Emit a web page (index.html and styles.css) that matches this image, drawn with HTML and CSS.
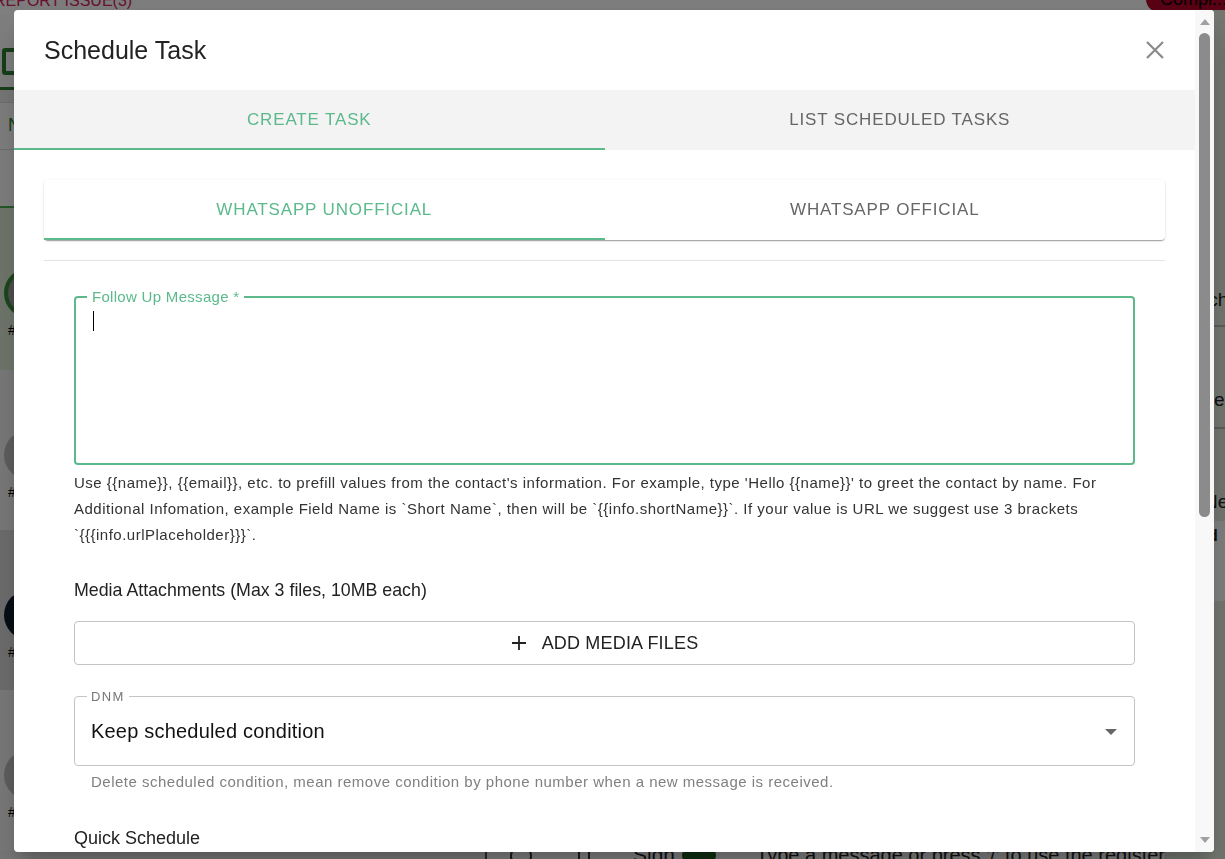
FILE: index.html
```html
<!DOCTYPE html>
<html lang="en">
<head>
    <meta charset="UTF-8">
    <meta name="viewport" content="width=device-width, initial-scale=1.0">
    <title>Schedule Task</title>
    <link rel="stylesheet" href="styles.css">
</head>
<body>
    <!-- page behind the dialog -->
    <div class="app">
        <div class="topbar">
            <span class="report">REPORT ISSUE(3)</span>
            <span class="complete-pill">Compl...</span>
        </div>
        <div class="main">
            <aside class="chat-list">
                <div class="list-head">
                    <div class="list-icon"></div>
                </div>
                <div class="list-filter">N</div>
                <div class="list-search"></div>
                <div class="chat-item chat-item-active">
                    <div class="avatar avatar-ring"></div>
                    <span class="chat-tag">#</span>
                </div>
                <div class="chat-item">
                    <div class="avatar"></div>
                    <span class="chat-tag">#</span>
                </div>
                <div class="chat-item chat-item-dark">
                    <div class="avatar avatar-dark"></div>
                    <span class="chat-tag">#</span>
                </div>
                <div class="chat-item">
                    <div class="avatar"></div>
                    <span class="chat-tag">#</span>
                </div>
            </aside>
            <section class="conversation">
                <div class="messages"></div>
                <div class="composer">
                    <span class="composer-smile"></span>
                    <span class="composer-bin"></span>
                    <span class="sign">Sign</span>
                    <span class="toggle"></span>
                    <span class="composer-text">Type a message or press '/' to use the registered quick replies</span>
                </div>
            </section>
            <aside class="info-panel">
                <div class="info-row info-row-first">Search</div>
                <div class="info-row info-row-second">Name</div>
                <div class="info-row info-row-third">New</div>
                <div class="info-row info-row-shade"><b>Added</b><br>Tag</div>
            </aside>
        </div>
    </div>

    <div class="overlay"></div>

    <div class="dialog">
        <div class="dialog-body">
            <div class="dialog-header">
                <h2 class="dialog-title">Schedule Task</h2>
                <svg class="close-icon" width="18" height="18" viewBox="0 0 18 18">
                    <path d="M1 1 L17 17 M17 1 L1 17" stroke="#8a8a8a" stroke-width="2.2" fill="none"/>
                </svg>
            </div>

            <div class="tabs">
                <div class="tab tab-active">Create Task</div>
                <div class="tab">List Scheduled Tasks</div>
            </div>

            <div class="dialog-content">
                <div class="sub-tabs">
                    <div class="tab sub-tab tab-active">WhatsApp Unofficial</div>
                    <div class="tab sub-tab">WhatsApp Official</div>
                </div>
                <hr class="divider">

                <form class="task-form">
                    <fieldset class="field field-focused">
                        <legend class="field-label">Follow Up Message *</legend>
                        <span class="caret"></span>
                    </fieldset>
                    <p class="help-text">Use {{name}}, {{email}}, etc. to prefill values from the contact's information. For example, type 'Hello {{name}}' to greet the contact by name. For Additional Infomation, example Field Name is `Short Name`, then will be `{{info.shortName}}`. If your value is URL we suggest use 3 brackets `{{{info.urlPlaceholder}}}`.</p>

                    <div class="section-label media-label">Media Attachments (Max 3 files, 10MB each)</div>
                    <button type="button" class="add-media">
                        <svg width="16" height="16" viewBox="0 0 16 16">
                            <path d="M8 1 V15 M1 8 H15" stroke="#222" stroke-width="1.8" fill="none"/>
                        </svg>
                        ADD MEDIA FILES
                    </button>

                    <fieldset class="field select-field">
                        <legend class="select-label">DNM</legend>
                        <span class="select-value">Keep scheduled condition</span>
                        <span class="select-arrow"></span>
                    </fieldset>
                    <p class="select-help">Delete scheduled condition, mean remove condition by phone number when a new message is received.</p>

                    <div class="section-label quick-label">Quick Schedule</div>
                </form>
            </div>
        </div>
        <div class="scrollbar">
            <span class="scroll-up"></span>
            <div class="scroll-track">
                <div class="scroll-thumb"></div>
            </div>
            <span class="scroll-down"></span>
        </div>
    </div>
</body>
</html>
```

FILE: styles.css
```css
* {
    box-sizing: border-box;
}

body {
    margin: 0;
    font-family: "Liberation Sans", Arial, sans-serif;
    color: #222;
    overflow: hidden;
}

/* page behind */
.app {
    height: 100vh;
    display: flex;
    flex-direction: column;
    background: #fafafa;
}

.topbar {
    height: 10px;
    display: flex;
    justify-content: space-between;
    align-items: flex-end;
    overflow: hidden;
}

.report {
    color: #d1245e;
    font-size: 16px;
    line-height: 16px;
    margin-left: -6px;
    margin-bottom: 1px;
}

.complete-pill {
    background: #b3002a;
    color: #000;
    font-size: 18px;
    line-height: 26px;
    padding: 0 10px 0 14px;
    border-radius: 14px;
    margin-right: -12px;
    margin-bottom: -2px;
}

.main {
    flex: 1;
    display: flex;
    min-height: 0;
}

.chat-list {
    width: 487px;
    flex-shrink: 0;
    border-right: 2px solid #555;
    display: flex;
    flex-direction: column;
    background: #f0f0f0;
}

.list-head {
    height: 80px;
    border-bottom: 3px solid #2e7d32;
    padding: 38px 0 0 2px;
    background: #fff;
}

.list-icon {
    width: 24px;
    height: 27px;
    border: 4px solid #2e7d32;
    border-radius: 3px;
}

.list-filter {
    height: 48px;
    border-top: 1px solid #ddd;
    border-bottom: 1px solid #ddd;
    margin-top: 12px;
    padding: 12px 8px;
    color: #2e7d32;
    font-size: 18px;
    background: #fff;
}

.list-search {
    height: 58px;
    background: #fff;
    border-bottom: 2px solid #4caf50;
}

.chat-item {
    height: 160px;
    padding: 60px 0 0 4px;
    background: #f4f4f4;
}

.chat-item-active {
    background: #e1efd9;
    height: 162px;
}

.chat-item-dark {
    background: #dcdcdc;
}

.avatar {
    width: 50px;
    height: 50px;
    border-radius: 50%;
    background: #bdbdbd;
}

.avatar-ring {
    border: 4px solid #388e3c;
    background: #9e9e9e;
}

.avatar-dark {
    background: #0d1b2a;
}

.chat-tag {
    display: inline-block;
    margin: 4px 0 0 4px;
    font-size: 14px;
    color: #000;
}

.conversation {
    flex: 1;
    min-width: 0;
    display: flex;
    flex-direction: column;
    overflow: hidden;
}

.messages {
    flex: 1;
}

.composer {
    height: 16px;
    display: flex;
    align-items: flex-start;
    padding-left: 23px;
    color: #222;
    background: #fff;
}

.composer > span {
    flex-shrink: 0;
}

.composer-smile {
    width: 22px;
    height: 22px;
    margin-top: 2px;
    border: 2px solid #333;
    border-radius: 50%;
}

.composer-bin {
    width: 12px;
    height: 16px;
    margin: 4px 0 0 46px;
    border-left: 2px solid #333;
    border-right: 2px solid #333;
}

.sign {
    font-size: 21px;
    line-height: 24px;
    margin-left: 43px;
}

.toggle {
    width: 34px;
    height: 20px;
    margin: 2px 0 0 7px;
    border-radius: 10px;
    background: #1b5e20;
}

.composer-text {
    font-size: 20px;
    line-height: 24px;
    margin-left: 40px;
    white-space: nowrap;
}

.info-panel {
    width: 60px;
    flex-shrink: 0;
    padding-top: 265px;
    border-left: 1px solid #ddd;
    display: flex;
    flex-direction: column;
    background: #e7efe1;
    overflow: hidden;
}

.info-row {
    padding-left: 2px;
    font-size: 19px;
    white-space: nowrap;
    border-bottom: 2px solid #bbb;
}

.info-row-first {
    height: 52px;
    padding-top: 14px;
}

.info-row-second {
    height: 102px;
    padding-top: 62px;
    padding-left: 8px;
}

.info-row-third {
    height: 92px;
    padding-top: 62px;
    padding-left: 38px;
    border-bottom: none;
}

.info-row-shade {
    background: #fff;
    padding-top: 6px;
    font-size: 16px;
    height: 80px;
    border-bottom: none;
}

.overlay {
    position: fixed;
    inset: 0;
    background: rgba(0, 0, 0, 0.5);
}

/* dialog */
.dialog {
    position: fixed;
    left: 14px;
    top: 10px;
    width: 1200px;
    height: 842px;
    background: #fff;
    border-radius: 4px;
    display: flex;
    overflow: hidden;
    box-shadow: 0 11px 15px -7px rgba(0, 0, 0, 0.2), 0 24px 38px 3px rgba(0, 0, 0, 0.14);
}

.dialog-body {
    flex: 1;
    overflow: hidden;
}

.dialog-header {
    height: 80px;
    display: flex;
    align-items: center;
    justify-content: space-between;
    padding: 0 31px 0 30px;
}

.dialog-title {
    margin: 0;
    font-size: 25px;
    font-weight: normal;
    color: #222;
}

.tabs {
    display: flex;
    background: #f3f3f3;
}

.tab {
    flex: 1;
    height: 60px;
    padding-top: 2px;
    display: flex;
    align-items: center;
    justify-content: center;
    text-transform: uppercase;
    font-size: 17px;
    letter-spacing: 0.05em;
    color: #666;
    border-bottom: 2px solid transparent;
}

.tab-active {
    color: #5bb98b;
    border-bottom-color: #5bb98b;
}

.dialog-content {
    padding: 30px 30px 0;
}

.sub-tabs {
    display: flex;
    background: #fff;
    border-radius: 4px;
    box-shadow: 0 2px 1px -1px rgba(0, 0, 0, 0.2), 0 1px 1px 0 rgba(0, 0, 0, 0.14), 0 1px 3px 0 rgba(0, 0, 0, 0.12);
}

.divider {
    margin: 20px 0 0;
    border: none;
    border-top: 1px solid #e3e3e3;
}

.task-form {
    padding: 27px 30px 0;
}

.field {
    margin: 0;
    padding: 0 16px;
    border: 1px solid #c4c4c4;
    border-radius: 4px;
    min-width: 0;
}

.field-focused {
    height: 177px;
    border: 2px solid #5bb98b;
    padding: 6px 16px 0;
}

.field-label {
    padding: 0 5px;
    margin-left: -5px;
    font-size: 15px;
    letter-spacing: 0.02em;
    color: #5bb98b;
}

.caret {
    display: block;
    width: 1px;
    height: 20px;
    background: #000;
    margin-left: 1px;
}

.help-text {
    margin: 5px 0 0;
    font-size: 15px;
    line-height: 26px;
    letter-spacing: 0.033em;
    color: #333;
}

.section-label {
    font-size: 18px;
    color: #222;
}

.media-label {
    margin-top: 32px;
    font-size: 17.8px;
}

.add-media {
    width: 100%;
    height: 44px;
    margin-top: 20px;
    display: flex;
    align-items: center;
    justify-content: center;
    gap: 15px;
    background: #fff;
    border: 1px solid #c4c4c4;
    border-radius: 4px;
    font-family: inherit;
    font-size: 18px;
    letter-spacing: 0.01em;
    color: #222;
}

.select-field {
    margin-top: 24px;
    height: 77px;
    display: flex;
    align-items: center;
    justify-content: space-between;
    padding: 0 16px 6px;
}

.select-label {
    padding: 0 4px;
    margin-left: -4px;
    font-size: 13px;
    letter-spacing: 0.1em;
    color: #777;
}

.select-value {
    font-size: 20px;
    letter-spacing: 0.01em;
    color: #111;
}

.select-arrow {
    width: 0;
    height: 0;
    border-left: 6px solid transparent;
    border-right: 6px solid transparent;
    border-top: 6px solid #666;
    margin-right: 1px;
}

.select-help {
    margin: 7px 0 0 17px;
    font-size: 15px;
    letter-spacing: 0.033em;
    color: #808080;
}

.quick-label {
    margin-top: 38px;
}

/* fake classic scrollbar */
.scrollbar {
    width: 19px;
    background: #f8f8f8;
    display: flex;
    flex-direction: column;
    align-items: center;
    padding: 9px 0 9px;
}

.scroll-up,
.scroll-down {
    width: 0;
    height: 0;
    border-left: 5px solid transparent;
    border-right: 5px solid transparent;
}

.scroll-up {
    border-bottom: 6px solid #a0a0a0;
}

.scroll-down {
    border-top: 6px solid #a0a0a0;
}

.scroll-track {
    flex: 1;
    width: 100%;
    display: flex;
    justify-content: center;
    padding-top: 8px;
}

.scroll-thumb {
    width: 11px;
    height: 484px;
    border-radius: 6px;
    background: #8b8b8b;
}
```
